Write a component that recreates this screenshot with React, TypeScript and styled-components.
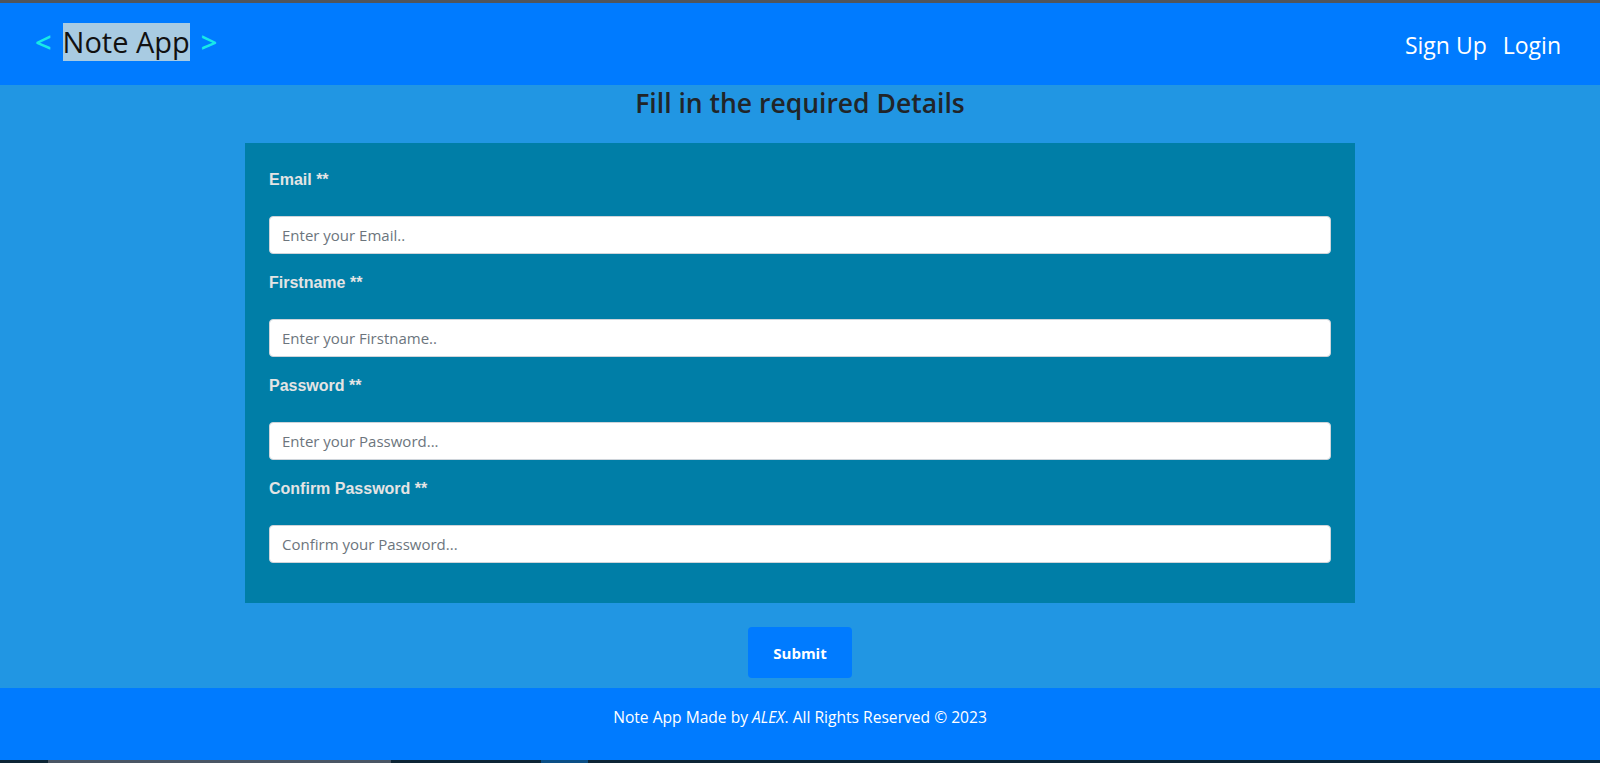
import React from "react";
import styled, { createGlobalStyle } from "styled-components";

const Global = createGlobalStyle`
  html, body { margin: 0; padding: 0; }
  body { font-family: "Open Sans", "Noto Sans", sans-serif; background: #2196e3; }
  * { box-sizing: border-box; }
`;

const Page = styled.div`
  display: flex;
  flex-direction: column;
  height: 763px;
  overflow: hidden;
`;

const TopStrip = styled.div`
  height: 3px;
  background: #4f555c;
  flex: none;
`;

const Header = styled.header`
  flex: none;
  height: 82px;
  background: #007bff;
  display: flex;
  align-items: center;
  justify-content: space-between;
  padding: 0 39px 0 35px;
`;

const Logo = styled.div`
  display: flex;
  align-items: center;
  gap: 11px;
  font-size: 29px;
  line-height: 38px;
  margin-top: -4px;
`;

const Bracket = styled.span`
  color: #18e8e8;
  font-weight: 600;
`;

const LogoText = styled.span`
  background: #a8cbe2;
  color: #111;
`;

const Nav = styled.nav`
  display: flex;
  gap: 16px;
  margin-top: 1px;
`;

const NavLink = styled.a`
  color: #fff;
  font-size: 23px;
  text-decoration: none;
  cursor: pointer;
`;

const Main = styled.main`
  flex: 1;
  background: #2196e3;
  display: flex;
  flex-direction: column;
  align-items: center;
`;

const Title = styled.h3`
  margin: 1px 0 0;
  font-size: 26.5px;
  font-weight: 600;
  line-height: 34px;
  color: #212529;
`;

const Card = styled.form`
  width: 1110px;
  margin-top: 23px;
  background: #007ea7;
  padding: 23px 24px 24px;
`;

const Group = styled.div`
  margin-bottom: 15px;
  &:last-child { margin-bottom: 16px; }
`;

const Label = styled.label`
  display: block;
  font-family: "Liberation Sans", Arial, sans-serif;
  font-weight: 700;
  font-size: 16px;
  line-height: 24px;
  color: #e4e4e4;
  padding-top: 2px;
  margin-bottom: 24px;
`;

const Input = styled.input`
  display: block;
  width: 100%;
  height: 38px;
  padding: 6px 12px;
  font-family: "Open Sans", sans-serif;
  font-size: 15px;
  color: #495057;
  background: #fff;
  border: 1px solid #ced4da;
  border-radius: 4px;
  outline: none;
  &::placeholder { color: #6c757d; }
`;

const Submit = styled.button`
  margin-top: 24px;
  width: 104px;
  height: 51px;
  border: none;
  border-radius: 4px;
  background: #007bff;
  color: #fff;
  font-family: "Open Sans", sans-serif;
  font-weight: 700;
  font-size: 15px;
  cursor: pointer;
`;

const Footer = styled.footer`
  flex: none;
  height: 72px;
  background: #007bff;
  color: #fff;
  display: flex;
  align-items: flex-start;
  justify-content: center;
  font-size: 15.6px;
  line-height: 24px;
  padding-top: 17px;
`;

const BottomStrip = styled.div`
  flex: none;
  height: 3px;
  background: #0d2535;
  display: flex;
`;

const StripSeg = styled.div<{ $w: number; $c: string; $ml: number }>`
  width: ${(p) => p.$w}px;
  margin-left: ${(p) => p.$ml}px;
  background: ${(p) => p.$c};
`;

const fields = [
  { label: "Email **", ph: "Enter your Email..", type: "email" },
  { label: "Firstname **", ph: "Enter your Firstname..", type: "text" },
  { label: "Password **", ph: "Enter your Password...", type: "password" },
  { label: "Confirm Password **", ph: "Confirm your Password...", type: "password" },
];

export default function App() {
  return (
    <>
      <Global />
      <Page>
        <TopStrip />
        <Header>
          <Logo>
            <Bracket>&lt;</Bracket>
            <LogoText>Note App</LogoText>
            <Bracket>&gt;</Bracket>
          </Logo>
          <Nav>
            <NavLink>Sign Up</NavLink>
            <NavLink>Login</NavLink>
          </Nav>
        </Header>
        <Main>
          <Title>Fill in the required Details</Title>
          <Card onSubmit={(e) => e.preventDefault()}>
            {fields.map((f) => (
              <Group key={f.label}>
                <Label>{f.label}</Label>
                <Input type={f.type} placeholder={f.ph} />
              </Group>
            ))}
          </Card>
          <Submit type="button">Submit</Submit>
        </Main>
        <Footer>
          <span>
            Note App Made by <i>ALEX</i>. All Rights Reserved © 2023
          </span>
        </Footer>
        <BottomStrip>
          <StripSeg $ml={48} $w={343} $c="#4a5664" />
          <StripSeg $ml={150} $w={47} $c="#0a4f86" />
        </BottomStrip>
      </Page>
    </>
  );
}
